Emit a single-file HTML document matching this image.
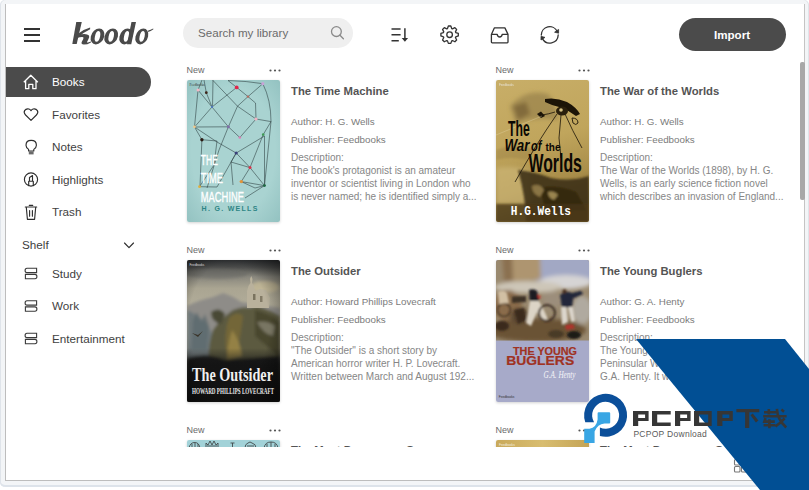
<!DOCTYPE html>
<html><head><meta charset="utf-8">
<style>
*{margin:0;padding:0;box-sizing:border-box}
html,body{width:809px;height:490px;overflow:hidden;background:#fff;font-family:"Liberation Sans",sans-serif}
.abs{position:absolute}
.t{position:absolute;white-space:nowrap;line-height:1}
#frame{position:absolute;left:0;top:0;width:809px;height:487px;background:#f3f5f7;border-radius:5px;box-shadow:inset 1px 0 0 #dfe4ea,inset -1px 0 0 #dfe4ea,inset 0 -2px 0 #dde3ea}
#win{position:absolute;left:5px;top:4px;width:800px;height:477px;background:#fff;border-left:1px solid #bdbdbd;border-right:1px solid #c4c4c4;border-bottom:1px solid #bdbdbd;overflow:hidden}
.nav{color:#3f3f3f;font-size:11.7px}
.navic{position:absolute}
.new{font-size:9px;color:#6a6a6a}
.dots{position:absolute;width:12px;height:3px}
.title{font-size:11.3px;font-weight:700;color:#545454}
.meta{font-size:9.8px;color:#7b7b7b}
.desc{font-size:10px;color:#868686}
.cover{position:absolute;width:93px;height:142px;border-radius:2px;overflow:hidden;box-shadow:0 1px 3px rgba(0,0,0,.18)}
</style></head><body>
<div id="frame"></div>
<div id="win"></div>
<!-- all coordinates below are page absolute -->
<div class="abs" style="left:0;top:0;width:809px;height:490px">

<!-- hamburger -->
<div class="abs" style="left:24px;top:28px;width:16px;height:1.6px;background:#333"></div>
<div class="abs" style="left:24px;top:34px;width:16px;height:1.6px;background:#333"></div>
<div class="abs" style="left:24px;top:40px;width:16px;height:1.6px;background:#333"></div>

<svg class="abs" style="left:60px;top:15px" width="100" height="35" viewBox="60 15 100 35">
<g fill="#4a4a4a" fill-rule="evenodd" transform="translate(9.35 0) skewX(-12)">
<path d="M71.6 22 H77.1 L76.7 44 H72.3 Z"/>
<path d="M75.6 34 Q80.5 29 86.6 27.4 L87 29.2 Q81.5 31.8 76.4 37.8 Z"/>
<path d="M76.3 35 Q84 32.8 87.2 35.6 Q88.3 37 87.3 39.5 L86.6 42 Q86.6 42.9 87.6 42.5 L90.3 41.4 L90.6 42.4 Q87.5 44.6 84 44.6 Q80.6 44.5 81.4 41.5 L82.2 38.9 Q82.7 37.2 81 37.1 Q78.6 37 76.3 37.8 Z"/>
<path d="M95.9 28.4 A6.7 8 0 1 1 95.9 44.4 A6.7 8 0 1 1 95.9 28.4 Z M95.9 31 A2.6 5.4 0 1 0 95.9 41.8 A2.6 5.4 0 1 0 95.9 31 Z"/>
<path d="M109.6 28.4 A6.7 8 0 1 1 109.6 44.4 A6.7 8 0 1 1 109.6 28.4 Z M109.6 31 A2.6 5.4 0 1 0 109.6 41.8 A2.6 5.4 0 1 0 109.6 31 Z"/>
<path d="M124.3 28.4 A6.4 8 0 1 1 124.3 44.4 A6.4 8 0 1 1 124.3 28.4 Z M124.9 31 A2.5 5.4 0 1 0 124.9 41.8 A2.5 5.4 0 1 0 124.9 31 Z"/>
<path d="M126.8 22 H131.3 V44.2 H127 Z"/>
<path d="M140.2 28.4 A6.3 8 0 1 1 140.2 44.4 A6.3 8 0 1 1 140.2 28.4 Z M140.5 31 A2.5 5.4 0 1 0 140.5 41.8 A2.5 5.4 0 1 0 140.5 31 Z"/>
<path d="M145.3 30.6 Q147.5 30.2 149.9 28.6 L150.3 29.3 Q148 31.3 145.5 32 Z"/>
</g>
</svg>


<!-- active pill -->
<div class="abs" style="left:6px;top:67px;width:145px;height:30px;background:#4b4b4b;border-radius:0 15px 15px 0"></div>

<div class="t nav" style="left:52px;top:76px;color:#fff">Books</div>
<div class="t nav" style="left:52px;top:109px">Favorites</div>
<div class="t nav" style="left:52px;top:141px">Notes</div>
<div class="t nav" style="left:52px;top:174px">Highlights</div>
<div class="t nav" style="left:52px;top:206px">Trash</div>
<div class="t nav" style="left:22px;top:239px">Shelf</div>
<div class="t nav" style="left:52px;top:268px">Study</div>
<div class="t nav" style="left:52px;top:300px">Work</div>
<div class="t nav" style="left:52px;top:333px">Entertainment</div>

<!-- search -->
<div class="abs" style="left:183px;top:18px;width:170px;height:30px;background:#efefef;border-radius:15px"></div>
<div class="t" style="left:198px;top:27px;font-size:11.6px;color:#6b6b6b">Search my library</div>

<!-- import -->
<div class="abs" style="left:679px;top:18px;width:107px;height:33px;background:#4b4b4b;border-radius:17px"></div>
<div class="t" style="left:714px;top:29px;font-size:11.6px;font-weight:700;color:#fff">Import</div>


<!-- cards clip -->
<div class="abs" style="left:0;top:55px;width:800px;height:392px;overflow:hidden">
<div class="abs" style="left:0;top:-55px;width:809px;height:490px">
<div class="t new" style="left:186.5px;top:66px">New</div>
<svg class="abs" style="left:269px;top:69px" width="12" height="3" viewBox="0 0 12 3"><circle cx="1.5" cy="1.5" r="1.1" fill="#555"/><circle cx="6" cy="1.5" r="1.1" fill="#555"/><circle cx="10.5" cy="1.5" r="1.1" fill="#555"/></svg>
<div class="cover" style="left:187px;top:80px"><svg width="93" height="142" viewBox="0 0 93 142">
<defs><radialGradient id="c1g" cx="50%" cy="50%" r="75%"><stop offset="60%" stop-color="#a9d3d1"/><stop offset="100%" stop-color="#8fbfbe"/></radialGradient></defs>
<rect width="93" height="142" fill="url(#c1g)"/>
<g fill="none" stroke="#28393a" stroke-width="0.55">
<path d="M15 0 L11 10 L7.5 47 L14.9 59.7 L13 106"/>
<path d="M17 0 L19.3 12.7 L25 27 L41.4 46.8 L52.8 57.5 L69 39"/>
<path d="M26 0 L25.5 27"/>
<path d="M11 10 L25 27"/>
<path d="M41 0.5 L49.7 7.4 L61 16.6 L68.5 23 L69 39 L84 41.6"/>
<path d="M41 0.5 Q60 1 75.8 3.7 Q84 20 84 41.6"/>
<path d="M49.7 7.4 L25 27 L7.5 47"/>
<path d="M75.8 3.7 L61 16.6 L50.5 26.2 L41.4 46.8 L32 70 L20 108"/>
<path d="M26 0.5 L50.5 26.2 L69 39"/>
<path d="M7.5 47 L41.4 46.8"/>
<path d="M7.5 47 L30 62 L49.2 73 L77.5 56"/>
<path d="M14.9 59.7 L30 61 L27 85 L12.5 106.7"/>
<path d="M84 41.6 L76.2 54.6 L63 87.6 L54.3 101.6 L77.5 105.6"/>
<path d="M77.5 56 L77.5 105.6 L63 87.6 L49.2 73 L44 82 L46 105"/>
<path d="M84 41.6 L77.5 105.6 L58 118"/>
<path d="M44 82 L63 87.6"/>
<path d="M54.3 101.6 L68 108 L77.5 105.6"/>
<path d="M12.5 106.7 L30 107 L49.2 73"/>
</g>
<g>
<circle cx="11.1" cy="10" r="1.6" fill="#f2b8c6"/>
<circle cx="19.3" cy="12.7" r="1.4" fill="#3d2418"/>
<circle cx="49.7" cy="7.4" r="1.9" fill="#e2264a"/>
<circle cx="75.8" cy="3.7" r="1.6" fill="#c9a3d8"/>
<circle cx="61" cy="16.6" r="1.2" fill="#b56a5e"/>
<circle cx="25" cy="26.9" r="1.1" fill="#4f78c0"/>
<circle cx="7.5" cy="46.8" r="1.4" fill="#f0c78a"/>
<circle cx="41.4" cy="46.8" r="1.5" fill="#7f6fa8"/>
<circle cx="69" cy="39" r="1.6" fill="#f2b3c3"/>
<circle cx="52.8" cy="57.5" r="1.3" fill="#d77fb4"/>
<circle cx="76.2" cy="54.6" r="1.3" fill="#3f9a55"/>
<circle cx="14.9" cy="59.7" r="1.7" fill="#2a1a12"/>
<circle cx="49.2" cy="73" r="1.6" fill="#3a3f7a"/>
<circle cx="63" cy="87.6" r="1.5" fill="#d9334a"/>
<circle cx="54.3" cy="101.6" r="1.7" fill="#e3953a"/>
<circle cx="77.5" cy="105.6" r="1.4" fill="#1f6a44"/>
<circle cx="12.5" cy="106.7" r="1.4" fill="#e0b03e"/>
</g>
<g font-family="Liberation Sans" fill="#fff" stroke="#fff" stroke-width="0.35">
<text x="13.8" y="84.9" font-size="14.2" textLength="17" lengthAdjust="spacingAndGlyphs">THE</text>
<text x="13.8" y="103.2" font-size="14.2" textLength="22.2" lengthAdjust="spacingAndGlyphs">TIME</text>
<text x="13.8" y="121.5" font-size="14.2" textLength="43.2" lengthAdjust="spacingAndGlyphs">MACHINE</text>
</g>
<text x="14.6" y="130.7" font-family="Liberation Sans" font-weight="700" font-size="7" fill="#2e8585" textLength="55.7" lengthAdjust="spacing">H. G. WELLS</text>
<text x="2.5" y="5.5" font-family="Liberation Serif" font-size="3.5" fill="#333">Feedbooks</text>
</svg>
</div>
<div class="t title" style="left:291px;top:85.7px">The Time Machine</div>
<div class="t meta" style="left:291px;top:116.9px">Author: H. G. Wells</div>
<div class="t meta" style="left:291px;top:134.7px">Publisher: Feedbooks</div>
<div class="t desc" style="left:291px;top:153.2px">Description:</div>
<div class="t desc" style="left:291px;top:166.0px">The book&#39;s protagonist is an amateur</div>
<div class="t desc" style="left:291px;top:179.0px">inventor or scientist living in London who</div>
<div class="t desc" style="left:291px;top:192.0px">is never named; he is identified simply a...</div>
<div class="t new" style="left:495.5px;top:66px">New</div>
<svg class="abs" style="left:578px;top:69px" width="12" height="3" viewBox="0 0 12 3"><circle cx="1.5" cy="1.5" r="1.1" fill="#555"/><circle cx="6" cy="1.5" r="1.1" fill="#555"/><circle cx="10.5" cy="1.5" r="1.1" fill="#555"/></svg>
<div class="cover" style="left:496px;top:80px"><svg width="93" height="142" viewBox="0 0 93 142">
<defs>
<linearGradient id="c2g" x1="0" y1="0" x2="0.2" y2="1"><stop offset="0" stop-color="#c8ae68"/><stop offset="0.5" stop-color="#c0a55c"/><stop offset="0.8" stop-color="#a98e4a"/><stop offset="1" stop-color="#7e6834"/></linearGradient>
<filter id="c2b" x="-20%" y="-20%" width="140%" height="140%"><feGaussianBlur stdDeviation="2"/></filter>
<filter id="c2b1" x="-10%" y="-10%" width="120%" height="120%"><feGaussianBlur stdDeviation="0.9"/></filter>
<filter id="c2n" x="0" y="0" width="100%" height="100%"><feTurbulence type="fractalNoise" baseFrequency="0.35" numOctaves="2" seed="3"/><feColorMatrix values="0 0 0 0 0.2  0 0 0 0 0.15  0 0 0 0 0.05  0 0 0 -1.6 1.05"/></filter>
</defs>
<rect width="93" height="142" fill="url(#c2g)"/>
<g filter="url(#c2b)">
<path d="M14 26 Q30 8 52 14 Q60 22 62 40 Q40 36 20 44 Z" fill="#8a7444" opacity="0.55"/>
<path d="M17 26 L30 22 L34 34 L22 40 Z" fill="#6a5630" opacity="0.6"/>
<path d="M0 88 Q18 84 34 92 L34 124 L0 124 Z" fill="#cdb676" opacity="0.7"/>
</g>
<g filter="url(#c2b1)">
<path d="M22 90 Q40 92 55 98 Q75 102 93 96 L93 142 L30 142 Q30 118 22 90 Z" fill="#3e3014" opacity="0.9"/><path d="M44 108 Q60 104 80 112 L90 130 L50 132 Z" fill="#2e220c" opacity="0.7"/>
<path d="M0 70 Q20 62 40 70 L30 80 Q15 76 0 80 Z" fill="#9e8446" opacity="0.5"/>
<path d="M36 106 Q44 103 48 110 L44 117 Q36 114 36 106 Z" fill="#8a7444"/><path d="M52 112 Q58 110 62 115 L58 120 Q52 118 52 112 Z" fill="#9a8450"/>
<path d="M0 124 H93 V142 H0 Z" fill="#4a3818" opacity="0.75"/>
</g>

<!-- tripod -->
<g fill="#1c1407">
<path d="M49 19 Q60 17 71 22 Q80 27 84 34 L80 36 Q72 30 63 27 Q55 25 49 22 Z"/>
<ellipse cx="66" cy="31" rx="6" ry="4.5" fill="#2a1f0c"/>
<circle cx="65" cy="30" r="1.8" fill="#d6c284"/>
<path d="M41 34 L45 31.5 L49 36 L45 38 Z"/>
<path d="M76 38 Q82 38 82 43 Q80 46 77 43 Z" fill="none" stroke="#1c1407" stroke-width="0.9"/>
</g>
<g fill="none" stroke="#1c1407" stroke-width="0.8">
<path d="M61 34 Q50 50 40 66 Q28 86 19 102"/>
<path d="M65 35 L63 58 L65 78"/>
<path d="M69 34 Q76 50 86 68"/>
<path d="M46 35 Q53 34 59 32"/>
</g>
<path d="M0 55 L46 36" stroke="#eadcae" stroke-width="0.6" opacity="0.55"/>
<g font-family="Liberation Sans" fill="#0b0803">
<text x="12" y="56" font-size="22.5" font-weight="700" textLength="21.7" lengthAdjust="spacingAndGlyphs">The</text>
<text x="8.5" y="71" font-size="16" font-weight="700" font-style="italic" textLength="25" lengthAdjust="spacingAndGlyphs">War</text>
<text x="35" y="71" font-size="15" font-weight="700" font-style="italic" textLength="10.5" lengthAdjust="spacingAndGlyphs">of</text>
<text x="49.5" y="70.5" font-size="11" font-weight="700" textLength="15" lengthAdjust="spacingAndGlyphs">the</text>
<text x="32.5" y="91.8" font-size="26" font-weight="700" textLength="53.4" lengthAdjust="spacingAndGlyphs">Worlds</text>
</g>
<text x="14.8" y="134.6" font-family="Liberation Mono" font-weight="700" font-size="13.6" fill="#fff" textLength="60" lengthAdjust="spacingAndGlyphs">H.G.Wells</text>
<text x="3" y="6" font-family="Liberation Sans" font-size="3" fill="#eee" opacity="0.8">Feedbooks</text>
</svg>
</div>
<div class="t title" style="left:600px;top:85.7px">The War of the Worlds</div>
<div class="t meta" style="left:600px;top:116.9px">Author: H. G. Wells</div>
<div class="t meta" style="left:600px;top:134.7px">Publisher: Feedbooks</div>
<div class="t desc" style="left:600px;top:153.2px">Description:</div>
<div class="t desc" style="left:600px;top:166.0px">The War of the Worlds (1898), by H. G.</div>
<div class="t desc" style="left:600px;top:179.0px">Wells, is an early science fiction novel</div>
<div class="t desc" style="left:600px;top:192.0px">which describes an invasion of England...</div>
<div class="t new" style="left:186.5px;top:246px">New</div>
<svg class="abs" style="left:269px;top:249px" width="12" height="3" viewBox="0 0 12 3"><circle cx="1.5" cy="1.5" r="1.1" fill="#555"/><circle cx="6" cy="1.5" r="1.1" fill="#555"/><circle cx="10.5" cy="1.5" r="1.1" fill="#555"/></svg>
<div class="cover" style="left:187px;top:260px"><svg width="93" height="142" viewBox="0 0 93 142">
<defs>
<linearGradient id="c3sky" x1="0" y1="0" x2="0" y2="1"><stop offset="0" stop-color="#2c2e30"/><stop offset="0.05" stop-color="#4a4b4a"/><stop offset="0.12" stop-color="#8a887e"/><stop offset="0.2" stop-color="#aaa592"/><stop offset="0.3" stop-color="#b0ab98"/><stop offset="1" stop-color="#8c8c88"/></linearGradient>
<radialGradient id="c3v" cx="45%" cy="45%" r="72%"><stop offset="0.6" stop-color="#000" stop-opacity="0"/><stop offset="1" stop-color="#000" stop-opacity="0.5"/></radialGradient>
<linearGradient id="c3bt" x1="0" y1="0" x2="0" y2="1"><stop offset="0" stop-color="#111" stop-opacity="0"/><stop offset="0.3" stop-color="#111" stop-opacity="0.7"/><stop offset="1" stop-color="#111" stop-opacity="0.88"/></linearGradient>
<filter id="c3f" x="-10%" y="-10%" width="120%" height="120%"><feGaussianBlur stdDeviation="1.6"/></filter>
<filter id="c3f2" x="-10%" y="-10%" width="120%" height="120%"><feGaussianBlur stdDeviation="0.7"/></filter>
</defs>
<rect width="93" height="142" fill="url(#c3sky)"/>
<g filter="url(#c3f)">
<ellipse cx="30" cy="14" rx="30" ry="5" fill="#6a6a66" opacity="0.6"/>
<ellipse cx="78" cy="27" rx="14" ry="6" fill="#cdbf98" opacity="0.6"/>
<path d="M0 46 Q12 40 26 37 L36 33 Q46 36 54 42 L93 48 L93 142 L0 142 Z" fill="#8e8c88"/>
<path d="M0 50 Q12 55 20 64 Q27 74 30 90 L30 100 L0 100 Z" fill="#70797c"/>
<path d="M6 60 L10 52 L14 62 L18 54 L22 66 L20 90 L4 90 Z" fill="#5e6a6e" opacity="0.8"/>
<path d="M26 70 Q34 58 46 50 Q56 46 62 48 L70 46 Q84 50 93 56 L93 110 L22 110 Q20 88 26 70 Z" fill="#5c5a40"/>
<path d="M24 52 Q32 46 38 54 L34 64 Q24 62 24 52 Z" fill="#4a4a36"/>
<path d="M42 58 Q50 50 56 56 Q54 74 50 92 L40 96 Q36 74 42 58 Z" fill="#736638"/>
<path d="M45 70 Q53 80 55 96 L40 100 Q40 86 45 70 Z" fill="#9a8646" opacity="0.85"/>
<path d="M68 50 Q85 54 93 62 L93 98 Q80 86 68 76 Z" fill="#48462e"/>
<path d="M70 62 Q80 60 88 66 L86 76 Q76 74 70 62 Z" fill="#8e8a7c" opacity="0.7"/>
<path d="M0 98 Q20 92 38 100 L93 96 L93 142 L0 142 Z" fill="#1e1e1c"/>
</g>
<g filter="url(#c3f2)">
<path d="M60 31 L61.5 26 L63.5 23 L63 19 L64.2 16 L65.5 19 L65 23 L67 26 L68 31 L73 29 L79 30 L83 38 L82 48 L60 48 Z" fill="#b9b19c"/>
<path d="M66 34 L68.5 34 L68.5 40 L66 40 Z" fill="#7a735f"/>
<path d="M73 36 L75.5 36 L75.5 42 L73 42 Z" fill="#827a66"/>
<path d="M5 73 L11 75 L16 71 L11 77 Z" fill="#3a342a"/>
</g>
<rect y="88" width="93" height="54" fill="url(#c3bt)"/>
<rect width="93" height="142" fill="url(#c3v)"/>
<text x="5" y="120.7" font-family="Liberation Serif" font-weight="700" font-size="18.5" fill="#f0f0f0" textLength="81" lengthAdjust="spacingAndGlyphs">The Outsider</text>
<text x="5" y="134" font-family="Liberation Serif" font-weight="700" font-size="8" fill="#e6e6e6" textLength="82" lengthAdjust="spacingAndGlyphs">HOWARD PHILLIPS LOVECRAFT</text>
<text x="2.5" y="5.5" font-family="Liberation Sans" font-size="3" fill="#ddd">Feedbooks</text>
</svg>
</div>
<div class="t title" style="left:291px;top:265.7px">The Outsider</div>
<div class="t meta" style="left:291px;top:296.9px">Author: Howard Phillips Lovecraft</div>
<div class="t meta" style="left:291px;top:314.7px">Publisher: Feedbooks</div>
<div class="t desc" style="left:291px;top:333.2px">Description:</div>
<div class="t desc" style="left:291px;top:346.0px">&quot;The Outsider&quot; is a short story by</div>
<div class="t desc" style="left:291px;top:359.0px">American horror writer H. P. Lovecraft.</div>
<div class="t desc" style="left:291px;top:372.0px">Written between March and August 192...</div>
<div class="t new" style="left:495.5px;top:246px">New</div>
<svg class="abs" style="left:578px;top:249px" width="12" height="3" viewBox="0 0 12 3"><circle cx="1.5" cy="1.5" r="1.1" fill="#555"/><circle cx="6" cy="1.5" r="1.1" fill="#555"/><circle cx="10.5" cy="1.5" r="1.1" fill="#555"/></svg>
<div class="cover" style="left:496px;top:260px"><svg width="93" height="142" viewBox="0 0 93 142">
<defs>
<filter id="c4f" x="-20%" y="-20%" width="140%" height="140%"><feGaussianBlur stdDeviation="2"/></filter>
<filter id="c4f2" x="-20%" y="-20%" width="140%" height="140%"><feGaussianBlur stdDeviation="1"/></filter>
</defs>
<rect width="93" height="142" fill="#a7aac9"/>
<svg x="0" y="0" width="93" height="80.5" overflow="hidden">
<rect width="93" height="81" fill="#9a8a70"/>
<g filter="url(#c4f)">
<rect x="40" y="-5" width="60" height="26" fill="#a2a8c4"/>
<path d="M6 -5 L44 -5 L45 19 L8 22 Z" fill="#ae9570"/>
<path d="M6 -5 L16 -5 L17 21 L8 22 Z" fill="#8a7050"/>
<ellipse cx="70" cy="22" rx="26" ry="7" fill="#d6d4d4"/>
<ellipse cx="32" cy="27" rx="34" ry="6" fill="#cdc6b8"/>
<ellipse cx="12" cy="46" rx="14" ry="16" fill="#8a6c4c"/>
<ellipse cx="40" cy="70" rx="50" ry="12" fill="#6a5236"/>
<ellipse cx="86" cy="50" rx="10" ry="14" fill="#b0aaa0"/>
<ellipse cx="56" cy="40" rx="10" ry="8" fill="#9c8e7c"/>
<ellipse cx="24" cy="56" rx="10" ry="8" fill="#5a4632"/>
</g>
<g filter="url(#c4f2)">
<path d="M64 35 Q70 30 76 33 L85 31 L87 34 L77 38.5 L76 48 L66 48 Z" fill="#22263a"/>
<path d="M65 47 L70.5 47 L72 62 L66 65 Z M72 47 L77 47 L79 61 L75.5 62 Z" fill="#dcd6cc"/>
<circle cx="68.5" cy="31.5" r="2.2" fill="#4a3020"/>
<path d="M33 30 Q38 28 41 31 L43 41 L34 43 Z" fill="#1e1c22"/>
<path d="M34 41 L43 41 Q48 50 52 59 L47 61 L41 52 L35 66 L30 63 Z" fill="#dcd4c6"/>
<circle cx="51" cy="53" r="8" fill="none" stroke="#3a2c20" stroke-width="2"/>
<path d="M16 36.5 L30 36 L30 42 L16 43 Z" fill="#3e3228"/>
<circle cx="8" cy="50" r="6.5" fill="none" stroke="#4a3828" stroke-width="1.5"/>
<path d="M2 32 Q8 29 11 33 L13 43 L3 44 Z" fill="#d2c0a4"/>
<path d="M18 50 L28 48 L30 60 L22 64 Z" fill="#3a2a1e"/>
<path d="M69 65 L77 64 L79 68.5 L70 70 Z" fill="#b8302a" opacity="0.85"/>
<path d="M41 35 L45 36 L43 39.5 Z" fill="#c03028"/>
<ellipse cx="6" cy="66" rx="7" ry="5" fill="#3a2c1e"/>
<ellipse cx="78" cy="75" rx="7" ry="4" fill="#1e1a18"/>
<ellipse cx="60" cy="74" rx="8" ry="4" fill="#4a3a28"/>
<path d="M76 34 L85 31 L86 33 L78 37 Z" fill="#22263a"/>
</g>
</svg>
<g font-family="Liberation Sans" font-weight="700" fill="#a03222" stroke="#a03222" stroke-width="0.2">
<text x="17" y="94.6" font-size="10.2" textLength="64" lengthAdjust="spacingAndGlyphs">THE YOUNG</text>
<text x="10.2" y="105" font-size="13" textLength="68" lengthAdjust="spacingAndGlyphs">BUGLERS</text>
</g>
<text x="47.5" y="117.5" font-family="Liberation Serif" font-style="italic" font-size="9.5" fill="#f4f4f8" textLength="32" lengthAdjust="spacingAndGlyphs">G.A. Henty</text>
<text x="2.7" y="137.5" font-family="Liberation Sans" font-size="3.2" fill="#333">Feedbooks</text>
</svg>
</div>
<div class="t title" style="left:600px;top:265.7px">The Young Buglers</div>
<div class="t meta" style="left:600px;top:296.9px">Author: G. A. Henty</div>
<div class="t meta" style="left:600px;top:314.7px">Publisher: Feedbooks</div>
<div class="t desc" style="left:600px;top:333.2px">Description:</div>
<div class="t desc" style="left:600px;top:346.0px">The Young Buglers: A Tale of the</div>
<div class="t desc" style="left:600px;top:359.0px">Peninsular War is a novel by</div>
<div class="t desc" style="left:600px;top:372.0px">G.A. Henty. It was first published...</div>
<div class="t new" style="left:186.5px;top:426px">New</div>
<svg class="abs" style="left:269px;top:429px" width="12" height="3" viewBox="0 0 12 3"><circle cx="1.5" cy="1.5" r="1.1" fill="#555"/><circle cx="6" cy="1.5" r="1.1" fill="#555"/><circle cx="10.5" cy="1.5" r="1.1" fill="#555"/></svg>
<div class="cover" style="left:187px;top:440px"><svg width="93" height="142" viewBox="0 0 93 142">
<rect width="93" height="142" fill="#a2d2d8"/>
<g fill="none" stroke="#333" stroke-width="0.9" opacity="0.85">
<path d="M2 8 Q3 3 7 2.5 Q12 2 13 8 M5 8 V4 M8 8 V3 M11 8 V4"/>
<path d="M19 8 L19 3 L21 5 L23 1 L25 5 L27 1 L29 5 L31 3 L31 8 M20 6 H30"/>
<path d="M43 8 H48 M45.5 8 V3 M43.5 3 H47.5"/>
<path d="M58 8 Q58 4 61 3 Q63 1 65 3 Q69 4 69 8 M60 6 H67"/>
<path d="M77 8 Q78 2 84 2 Q90 2 91 8 M80 8 V4 M84 8 V2 M88 8 V4"/>
</g>
</svg>
</div>
<div class="t title" style="left:291px;top:444.6px">The Most Dangerous Game</div>
<div class="t meta" style="left:291px;top:476.9px">Author: Anonymous</div>
<div class="t meta" style="left:291px;top:494.7px">Publisher: Feedbooks</div>
<div class="t desc" style="left:291px;top:513.2px">Description:</div>
<div class="t new" style="left:495.5px;top:426px">New</div>
<svg class="abs" style="left:578px;top:429px" width="12" height="3" viewBox="0 0 12 3"><circle cx="1.5" cy="1.5" r="1.1" fill="#555"/><circle cx="6" cy="1.5" r="1.1" fill="#555"/><circle cx="10.5" cy="1.5" r="1.1" fill="#555"/></svg>
<div class="cover" style="left:496px;top:440px"><svg width="93" height="142" viewBox="0 0 93 142">
<defs><linearGradient id="c6g" x1="0" y1="0" x2="1" y2="0"><stop offset="0" stop-color="#c9a95a"/><stop offset="0.5" stop-color="#d8bd70"/><stop offset="1" stop-color="#c4a456"/></linearGradient></defs>
<rect width="93" height="142" fill="url(#c6g)"/>
<text x="3" y="6" font-family="Liberation Sans" font-size="3.2" fill="#f4f0e0">Feedbooks</text>
</svg>
</div>
<div class="t title" style="left:600px;top:444.6px">The Most Dangerous Game</div>
<div class="t meta" style="left:600px;top:476.9px">Author: Anonymous</div>
<div class="t meta" style="left:600px;top:494.7px">Publisher: Feedbooks</div>
<div class="t desc" style="left:600px;top:513.2px">Description:</div>

</div></div>

<!-- sidebar icons -->
<svg class="abs" style="left:0;top:0" width="200" height="360" viewBox="0 0 200 360">
<g fill="none" stroke="#fff" stroke-width="1.3" stroke-linejoin="round">
<path d="M23.8 82.2 L30.8 75.2 L37.8 82.2 M25.6 80.6 V88.7 H28.8 V84.3 H32.8 V88.7 H36 V80.6"/>
</g>
<g fill="none" stroke="#2e2e2e" stroke-width="1.15" stroke-linejoin="round" stroke-linecap="round">
<path d="M31 120.3 L25.6 115 Q23.4 112.6 24.6 110.6 Q26.2 108.2 28.9 109 Q30.3 109.5 31 110.7 Q31.7 109.5 33.1 109 Q35.8 108.2 37.4 110.6 Q38.6 112.6 36.4 115 Z"/>
<path d="M28.6 151 V149.4 Q26 147.6 26 145.2 Q26 140.4 31.2 140.4 Q36.4 140.4 36.4 145.2 Q36.4 147.6 33.8 149.4 V151 Z"/>
<circle cx="31" cy="179.5" r="6.6"/>
<path d="M28.7 185.6 V181.2 H33.3 V185.6 M29.5 181.2 V177.6 L32.5 175.6 V181.2"/>
<path d="M25.3 207 H36.7 M29.3 205.4 H32.7 M26.3 207.2 L27.4 219.3 H34.6 L35.7 207.2 M29.6 210.5 V216.2 M32.4 210.5 V216.2"/>
<path d="M124.5 243 L129 247.6 L133.5 243"/>
</g>
<rect x="28.8" y="151.4" width="4.8" height="3" fill="#6a6a6a"/>
<g fill="none" stroke="#3a3a3a" stroke-width="1.1">
<path d="M27 268.3 H36.6 V272.6 H27 Q25.1 272.6 25.1 270.45 Q25.1 268.3 27 268.3 Z"/>
<path d="M25.4 274.4 H35 Q36.9 274.4 36.9 276.55 Q36.9 278.7 35 278.7 H25.4 Z"/>
<path d="M27 300.8 H36.6 V305.1 H27 Q25.1 305.1 25.1 302.95 Q25.1 300.8 27 300.8 Z"/>
<path d="M25.4 306.9 H35 Q36.9 306.9 36.9 309.05 Q36.9 311.2 35 311.2 H25.4 Z"/>
<path d="M27 333.3 H36.6 V337.6 H27 Q25.1 337.6 25.1 335.45 Q25.1 333.3 27 333.3 Z"/>
<path d="M25.4 339.4 H35 Q36.9 339.4 36.9 341.55 Q36.9 343.7 35 343.7 H25.4 Z"/>
</g>
</svg>
<!-- top icons -->
<svg class="abs" style="left:320px;top:15px" width="250" height="40" viewBox="320 15 250 40">
<g fill="none" stroke="#8a8a8a" stroke-width="1.3" stroke-linecap="round">
<circle cx="336.4" cy="31.6" r="4.9"/>
<path d="M340 35.3 L343.4 38.8"/>
</g>
<g fill="none" stroke="#333" stroke-width="1.5" stroke-linecap="butt">
<path d="M391.5 29.1 H400.6 M391.5 34.8 H400.6 M391.5 40.7 H398.8 M404.9 28.3 V40"/>
</g>
<path d="M401.7 38 H408.1 L404.9 41.8 Z" fill="#333"/>
<g fill="none" stroke="#333" stroke-width="1.3" stroke-linejoin="round">
<path d="M447.49 28.55 L448.37 25.99 L450.83 25.99 L451.71 28.55 L452.46 28.86 L454.89 27.67 L456.63 29.41 L455.44 31.84 L455.75 32.59 L458.31 33.47 L458.31 35.93 L455.75 36.81 L455.44 37.56 L456.63 39.99 L454.89 41.73 L452.46 40.54 L451.71 40.85 L450.83 43.41 L448.37 43.41 L447.49 40.85 L446.74 40.54 L444.31 41.73 L442.57 39.99 L443.76 37.56 L443.45 36.81 L440.89 35.93 L440.89 33.47 L443.45 32.59 L443.76 31.84 L442.57 29.41 L444.31 27.67 L446.74 28.86 Z"/>
<circle cx="449.6" cy="34.7" r="2.8"/>
<path d="M494.3 27.9 H504.9 L508 34.4 V42.1 Q508 42.9 507.2 42.9 H492.2 Q491.4 42.9 491.4 42.1 V34.4 Z M491.4 34.4 H497.2 Q497.6 37 499.7 37 Q501.8 37 502.2 34.4 H508"/>
<path d="M541.3 35 A8.4 8.4 0 0 1 557.2 31.3" stroke-linecap="round"/>
<path d="M558.2 35 A8.4 8.4 0 0 1 542.4 38.6" stroke-linecap="round"/>
</g>
<path d="M558.6 29.4 L558.6 33.2 L554.6 32.2 Z" fill="#333" stroke="#333" stroke-width="0.8" stroke-linejoin="round"/>
<path d="M541 40 L541 36.3 L545 37.4 Z" fill="#333" stroke="#333" stroke-width="0.8" stroke-linejoin="round"/>
</svg>

<!-- scrollbar -->
<div class="abs" style="left:800px;top:62px;width:5px;height:138px;background:#a8a8a8;border-radius:2px"></div>

</div>
<svg style="position:absolute;left:0;top:0" width="809" height="490" viewBox="0 0 809 490">
<g fill="none" stroke="#777" stroke-width="1.1"><rect x="734.5" y="459.5" width="5.5" height="5.5" rx="1"/><rect x="734.5" y="466.5" width="5.5" height="5.5" rx="1"/><rect x="741.5" y="459.5" width="5.5" height="5.5" rx="1"/><rect x="741.5" y="466.5" width="5.5" height="5.5" rx="1"/></g>
<polygon points="636,339 785,339 809,369 809,490 760,490" fill="#014f94"/>
<g>
<path d="M585.27 422.3 A21.5 21.5 0 1 1 599.9 436.03 L599.9 427.54 A13.5 13.5 0 1 0 594.06 422.3 Z" fill="#0b4f9a"/>
<path d="M598.6 412.3 H609.2 Q610.2 412.3 610.2 413.3 V422.5 Q610.2 423.5 609.2 423.5 H604.5 Q597.5 424 594.6 431.5 V443 H584.2 V428.8 H589.5 Q596.5 427.5 597.6 419.5 V413.3 Q597.6 412.3 598.6 412.3 Z" fill="#39a6e4"/>
</g>
<g fill="#363636" fill-rule="evenodd">
<path d="M633 410.9 H648.6 V420.9 H638.2 V426 H633 Z M638.2 414.4 H645.1 V417.9 H638.2 Z"/>
<path d="M652 410.9 H670.7 V414.4 H657.2 V422.5 H670.7 V426 H652 Z"/>
<path d="M675 410.9 H690.6 V420.9 H680.2 V426 H675 Z M680.2 414.4 H687.1 V417.9 H680.2 Z"/>
<path d="M694 410.9 H711.7 V426 H694 Z M699.2 414.4 H708.2 V422.5 H699.2 Z"/>
<path d="M717.2 410.9 H732.8 V420.9 H722.4 V426 H717.2 Z M722.4 414.4 H729.3 V417.9 H722.4 Z"/>
<path d="M736.4 408.9 H759.3 V412.3 H749.3 V428.1 H745.1 V412.3 H736.4 Z M750.5 415.2 L752.8 413.6 L758.4 420.6 L755.9 422.4 Z"/>
</g><g fill="none" stroke="#363636" stroke-width="2.6" stroke-linecap="butt">
<path d="M764 412.3 H776 M768.8 408.9 V414.5 M763.2 416.3 H786.6 M765.5 418.2 L764.4 421.6 H774.8 M769.4 419.3 V428.2 M763.6 425.2 H775.3 M776.9 408.9 Q777.2 419.5 786.2 427.4 M775.5 426.4 Q781 422.5 784.6 418.3 M781.4 409.6 L784 411.8"/>
</g><g>
</g>
<text x="633.4" y="437" font-family="Liberation Sans" font-size="8.5" fill="#5a5a5a" textLength="73.4" lengthAdjust="spacing">PCPOP Download</text>
</svg>

</body></html>
